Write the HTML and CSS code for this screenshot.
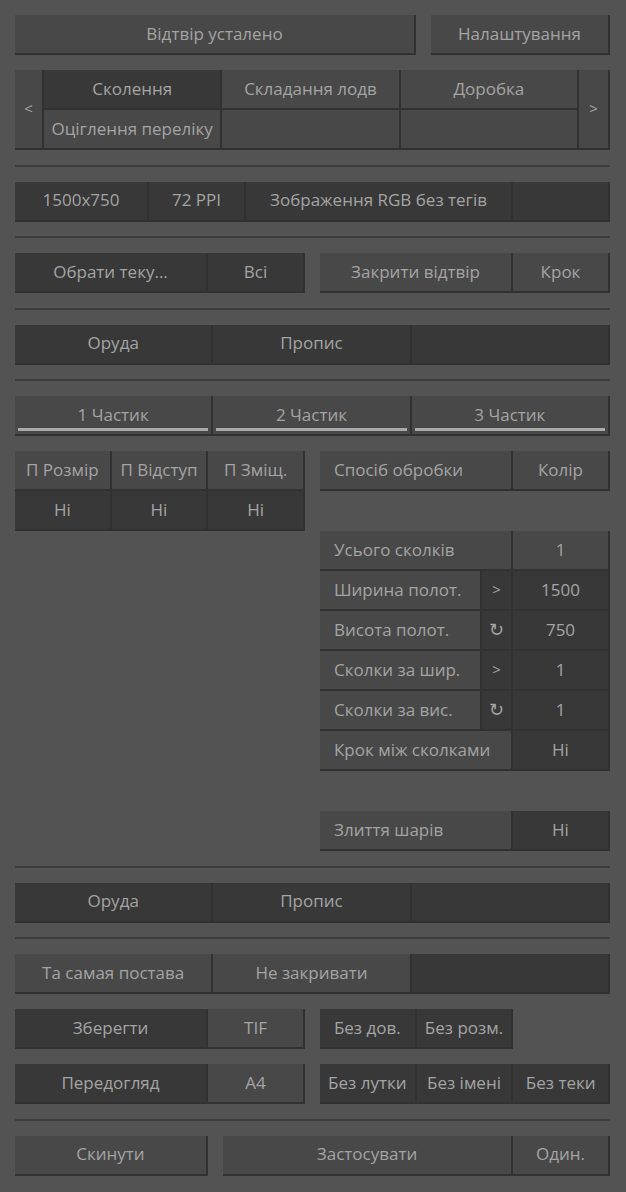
FILE: index.html
```html
<!DOCTYPE html>
<html lang="uk">
<head>
<meta charset="utf-8">
<title>Панель</title>
<link rel="stylesheet" href="styles.css">
</head>
<body>
<div class="panel">
  <div class="row-top">
    <div class="c l">Відтвір усталено</div>
    <div class="c l">Налаштування</div>
  </div>

  <div class="tabs">
    <div class="c l arrow">&lt;</div>
    <div class="c d">Сколення</div>
    <div class="c l">Складання лодв</div>
    <div class="c l">Доробка</div>
    <div class="c l arrow">&gt;</div>
    <div class="c l">Оціглення переліку</div>
    <div class="c l"></div>
    <div class="c l"></div>
  </div>

  <div class="sep"></div>

  <div class="info">
    <div class="c d">1500x750</div>
    <div class="c d">72 PPI</div>
    <div class="c d">Зображення RGB без тегів</div>
    <div class="c d"></div>
  </div>

  <div class="sep"></div>

  <div class="halves">
    <div class="pair">
      <div class="c d">Обрати теку...</div>
      <div class="c d">Всі</div>
    </div>
    <div class="pair">
      <div class="c l">Закрити відтвір</div>
      <div class="c l">Крок</div>
    </div>
  </div>

  <div class="sep"></div>

  <div class="thirds">
    <div class="c d">Оруда</div>
    <div class="c d">Пропис</div>
    <div class="c d"></div>
  </div>

  <div class="sep"></div>

  <div class="thirds">
    <div class="c l part">1 Частик</div>
    <div class="c l part">2 Частик</div>
    <div class="c l part">3 Частик</div>
  </div>

  <div class="halves block">
    <div class="grid3">
      <div class="c l">П Розмір</div>
      <div class="c l">П Відступ</div>
      <div class="c l">П Зміщ.</div>
      <div class="c d">Ні</div>
      <div class="c d">Ні</div>
      <div class="c d">Ні</div>
    </div>
    <div class="props">
      <div class="pair">
        <div class="c l lab">Спосіб обробки</div>
        <div class="c l">Колір</div>
      </div>
      <div class="blank"></div>
      <div class="pair">
        <div class="c l lab">Усього сколків</div>
        <div class="c l">1</div>
      </div>
      <div class="triple">
        <div class="c l lab">Ширина полот.</div>
        <div class="c d sym">&gt;</div>
        <div class="c d">1500</div>
      </div>
      <div class="triple">
        <div class="c l lab">Висота полот.</div>
        <div class="c d sym rot">↻</div>
        <div class="c d">750</div>
      </div>
      <div class="triple">
        <div class="c l lab">Сколки за шир.</div>
        <div class="c d sym">&gt;</div>
        <div class="c d">1</div>
      </div>
      <div class="triple">
        <div class="c l lab">Сколки за вис.</div>
        <div class="c d sym rot">↻</div>
        <div class="c d">1</div>
      </div>
      <div class="pair">
        <div class="c l lab">Крок між сколками</div>
        <div class="c d">Ні</div>
      </div>
      <div class="blank"></div>
      <div class="pair">
        <div class="c l lab">Злиття шарів</div>
        <div class="c d">Ні</div>
      </div>
    </div>
  </div>

  <div class="sep"></div>

  <div class="thirds">
    <div class="c d">Оруда</div>
    <div class="c d">Пропис</div>
    <div class="c d"></div>
  </div>

  <div class="sep"></div>

  <div class="thirds">
    <div class="c l">Та самая постава</div>
    <div class="c l">Не закривати</div>
    <div class="c d"></div>
  </div>

  <div class="halves">
    <div class="pair">
      <div class="c d">Зберегти</div>
      <div class="c l">TIF</div>
    </div>
    <div class="grid3">
      <div class="c d">Без дов.</div>
      <div class="c d">Без розм.</div>
    </div>
  </div>

  <div class="halves">
    <div class="pair">
      <div class="c d">Передогляд</div>
      <div class="c l">A4</div>
    </div>
    <div class="grid3">
      <div class="c d">Без лутки</div>
      <div class="c d">Без імені</div>
      <div class="c d">Без теки</div>
    </div>
  </div>

  <div class="sep"></div>

  <div class="row-bottom">
    <div class="c l reset">Скинути</div>
    <div class="c l apply">Застосувати</div>
    <div class="c l one">Один.</div>
  </div>
</div>
</body>
</html>
```

FILE: styles.css
```css
html, body {
  margin: 0;
  padding: 0;
  background: #535353;
}

.panel {
  box-sizing: border-box;
  width: 626px;
  padding: 15px 16px 16px 15px;
  display: flex;
  flex-direction: column;
  gap: 15px;
  font-family: "Open Sans", "DejaVu Sans", sans-serif;
  font-size: 17px;
}

.c {
  box-sizing: border-box;
  height: 40px;
  padding-bottom: 2px;
  display: flex;
  align-items: center;
  justify-content: center;
  border-right: 2px solid #313131;
  border-bottom: 2px solid #313131;
  color: #a4a4a4;
  white-space: nowrap;
  overflow: hidden;
  position: relative;
}

.l { background: #484848; }
.d { background: #383838; }

.sep {
  height: 2px;
  margin-top: -0.5px;
  background: #3d3d3d;
}

.row-top {
  display: grid;
  grid-template-columns: 1fr 179px;
  column-gap: 15px;
}

.tabs {
  display: grid;
  grid-template-columns: 29px 1fr 1fr 1fr 31px;
  grid-template-rows: 40px 40px;
}

.tabs .arrow {
  grid-row: span 2;
  height: 80px;
  font-size: 15px;
}

.info {
  display: grid;
  grid-template-columns: 134px 97px 1fr 97px;
}

.halves {
  display: grid;
  grid-template-columns: 290px 290px;
  justify-content: space-between;
  align-items: start;
}

.pair {
  display: grid;
  grid-template-columns: 193px 97px;
}

.triple {
  display: grid;
  grid-template-columns: 162px 31px 97px;
}

.grid3 {
  display: grid;
  grid-template-columns: repeat(3, 1fr);
}

.thirds {
  display: grid;
  grid-template-columns: repeat(3, 1fr);
}

.props {
  display: flex;
  flex-direction: column;
}

.blank {
  height: 40px;
}

.lab {
  justify-content: flex-start;
  padding-left: 14px;
}

.sym {
  font-size: 15px;
}

.sym.rot {
  font-family: "DejaVu Sans", sans-serif;
  font-size: 18px;
  font-weight: 300;
}

.part::after {
  content: "";
  position: absolute;
  left: 3px;
  right: 3px;
  bottom: 3px;
  height: 3px;
  background: #a9a9a9;
}

.row-bottom {
  display: flex;
}

.row-bottom .reset {
  width: 193px;
  margin-right: 15px;
}

.row-bottom .apply {
  flex: 1;
}

.row-bottom .one {
  width: 97px;
}
```
